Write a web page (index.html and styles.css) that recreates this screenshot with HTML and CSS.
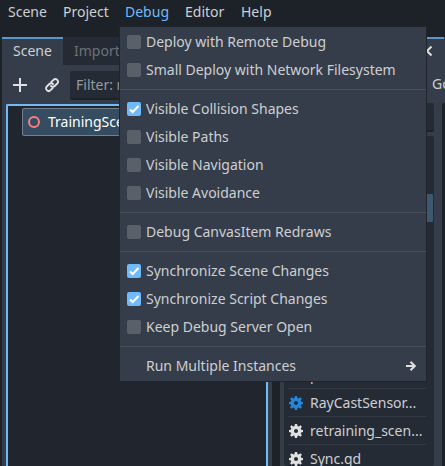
FILE: index.html
```html
<!DOCTYPE html>
<html lang="en">
<head>
<meta charset="utf-8">
<title>Scene editor</title>
<link rel="stylesheet" href="styles.css">
</head>
<body>
<svg class="defs" aria-hidden="true">
  <symbol id="gear" viewBox="0 0 14 14"><path fill-rule="evenodd" d="M5.900 0h2.200l.4 2 1.200.5 1.700-1.200 1.500 1.500-1.200 1.700.5 1.200 1.800.3v2.100l-1.800.3-.5 1.200 1.200 1.700-1.500 1.500-1.700-1.200-1.200.5-.4 1.900H5.900l-.4-1.900-1.200-.5-1.700 1.200-1.500-1.500 1.200-1.700-.5-1.200L0 8.100V6l1.800-.3.5-1.200L1.100 2.800l1.500-1.500 1.700 1.200L5.500 2zM7 5a2 2 0 1 0 0 4 2 2 0 0 0 0-4z"/></symbol>
</svg>
<nav class="menubar">
  <span class="m-scene">Scene</span><span class="m-project">Project</span><span class="m-debug active">Debug</span><span class="m-editor">Editor</span><span>Help</span>
</nav>
<main class="workspace">
  <section class="dock left">
    <div class="tabs"><div class="tab selected">Scene</div><div class="tab">Import</div></div>
    <div class="toolbar">
      <svg class="add" width="14" height="14" viewBox="0 0 14 14"><path d="M7 0v14M0 7h14" stroke="#e0e0e0" stroke-width="2"/></svg>
      <svg class="link" width="16" height="16" viewBox="0 0 16 16" fill="none" stroke="#e0e0e0" stroke-width="1.900" stroke-linecap="round"><path d="M7.300 5 9.500 2.800a2.600 2.600 0 0 1 3.700 3.700L10.700 9A2.600 2.600 0 0 1 7 9M8.700 11l-2.200 2.200a2.600 2.600 0 0 1-3.700-3.700L5.300 7A2.600 2.600 0 0 1 9 7"/></svg>
      <div class="filter">Filter: name</div>
    </div>
    <div class="tree"><div class="node"><svg width="14" height="14" viewBox="0 0 14 14"><circle cx="7" cy="7" r="5" fill="none" stroke="#fc7f7f" stroke-width="2"/></svg><span>TrainingScene</span></div></div>
  </section>
  <section class="dock right">
    <div class="right-tab"><svg width="14" height="14" viewBox="0 0 14 14"><path d="M10.500 2.500 6 7l4.500 4.500" fill="none" stroke="#e0e0e0" stroke-width="2"/></svg></div>
    <div class="go">Go</div>
    <div class="right-body">
      <div class="script-panel">
        <div class="script-filter"></div>
        <div class="scripts">
          <div class="script"><span>plane.tscn</span></div>
          <div class="script"><svg class="gear blue"><use href="#gear"/></svg><span>RayCastSensor...</span></div>
          <div class="script"><svg class="gear"><use href="#gear"/></svg><span>retraining_scen...</span></div>
          <div class="script"><svg class="gear"><use href="#gear"/></svg><span>Sync.gd</span></div>
          <div class="thumb"></div>
        </div>
      </div>
      <div class="editor"></div>
    </div>
  </section>
</main>
<div class="popup">
  <div class="item"><i class="box"></i><span>Deploy with Remote Debug</span></div>
  <div class="item"><i class="box"></i><span>Small Deploy with Network Filesystem</span></div>
  <hr>
  <div class="item"><i class="box on"><svg viewBox="0 0 14 14"><path d="m3 7.500 2.700 2.500L11.500 4"/></svg></i><span>Visible Collision Shapes</span></div>
  <div class="item"><i class="box"></i><span>Visible Paths</span></div>
  <div class="item"><i class="box"></i><span>Visible Navigation</span></div>
  <div class="item"><i class="box"></i><span>Visible Avoidance</span></div>
  <hr>
  <div class="item"><i class="box"></i><span>Debug CanvasItem Redraws</span></div>
  <hr>
  <div class="item"><i class="box on"><svg viewBox="0 0 14 14"><path d="m3 7.500 2.700 2.500L11.500 4"/></svg></i><span>Synchronize Scene Changes</span></div>
  <div class="item"><i class="box on"><svg viewBox="0 0 14 14"><path d="m3 7.500 2.700 2.500L11.500 4"/></svg></i><span>Synchronize Script Changes</span></div>
  <div class="item"><i class="box"></i><span>Keep Debug Server Open</span></div>
  <hr>
  <div class="item"><i class="box none"></i><span>Run Multiple Instances</span><svg class="arrow" width="10" height="12" viewBox="0 0 10 12"><path d="M0 6h8.500M4.500 1.700 8.800 6l-4.300 4.300" fill="none" stroke="#e0e0e0" stroke-width="2"/></svg></div>
</div>
</body>
</html>
```
FILE: styles.css
```css
* { box-sizing: border-box; }
body {
  margin: 0;
  width: 445px;
  height: 466px;
  overflow: hidden;
  position: relative;
  background: #1d2229;
  color: #cdcfd2;
  font: 14px/20px "Noto Sans", sans-serif;
  white-space: nowrap;
}
.defs { position: absolute; width: 0; height: 0; }
.menubar { display: flex; height: 37px; padding: 2px 0 0 8px; }
.m-scene { width: 55px; }
.m-project { width: 62px; }
.m-debug { width: 60px; }
.m-editor { width: 56px; }
.active { color: #70bafa; }
.workspace { display: flex; gap: 8px; height: 429px; padding-left: 2px; }
.dock { display: flex; flex-direction: column; overflow: hidden; }
.left { width: 270px; flex: none; background: #363d4a; }
.tabs { display: flex; height: 28px; background: #252b34; }
.tab { padding: 4px 11px; color: #6d7178; }
.tab.selected { width: 61px; padding-top: 2px; border-top: 2px solid #5797cc; background: #363d4a; color: #cdcfd2; }
.toolbar { display: flex; align-items: center; height: 39px; padding: 1px 0 0 11px; }
.link { margin-left: 17px; }
.filter { flex: 1; height: 29px; margin: 0 4px 0 10px; padding: 4px 6px; background: #252b34; border-bottom: 2px solid #1d2229; border-radius: 2px; color: #969a9f; }
.tree { flex: 1; margin: 0 4px; padding: 2px 2px 0 14px; border: 2px solid #70bafa; border-bottom: 0; border-radius: 2px 2px 0 0; background: #21262e; }
.node { display: flex; align-items: center; gap: 7px; height: 28px; padding: 0 5px 1px 4px; border: 1px solid #71818f; border-radius: 2px; background: #364c60; color: #fff; }
.right { flex: 1; background: #363d4a; }
.right-tab { flex: none; height: 28px; width: 164px; padding: 5px 0 0 141px; border-top: 2px solid #5797cc; }
.right-tab svg { display: block; }
.go { flex: none; height: 38px; padding: 9px 0 0 152px; }
.right-body { display: flex; flex: 1; min-height: 0; gap: 8px; padding-left: 4px; }
.script-panel { display: flex; flex-direction: column; gap: 4px; width: 150px; flex: none; }
.script-filter { flex: none; height: 29px; background: #252b34; border-bottom: 2px solid #1d2229; border-radius: 2px; }
.scripts { position: relative; flex: 1; min-height: 0; padding-top: 225px; background: #252b34; border-radius: 2px; overflow: hidden; }
.script { display: flex; align-items: center; height: 28px; width: 138px; margin-left: 4px; border-bottom: 1px solid #333943; }
.script:first-child { padding-left: 22px; }
.gear { width: 14px; height: 14px; margin: 0 7px 0 1px; fill: #e0e0e0; flex: none; }
.gear.blue { fill: #2485db; }
.thumb { position: absolute; right: 1px; top: 58px; width: 8px; height: 28px; background: #3d5871; border-radius: 1px; }
.editor { flex: 1; background: #1d2229; border-radius: 2px 0 0; }
.popup { position: absolute; left: 120px; top: 27px; width: 306px; height: 354px; padding-top: 1px; background: #363d4a; box-shadow: 0 0 0 1px #20252c; }
.item { display: flex; align-items: center; height: 28px; padding: 0 10px 0 7px; }
.popup hr { height: 1px; margin: 5px 0; border: 0; background: #4a505b; }
.box { width: 14px; height: 14px; margin-right: 5px; flex: none; border-radius: 2px; background: #5a6068; }
.box.on { background: #70bafa; }
.box.none { background: none; }
.box svg { display: block; fill: none; stroke: #fff; stroke-width: 2; }
.arrow { margin-left: auto; }
```
